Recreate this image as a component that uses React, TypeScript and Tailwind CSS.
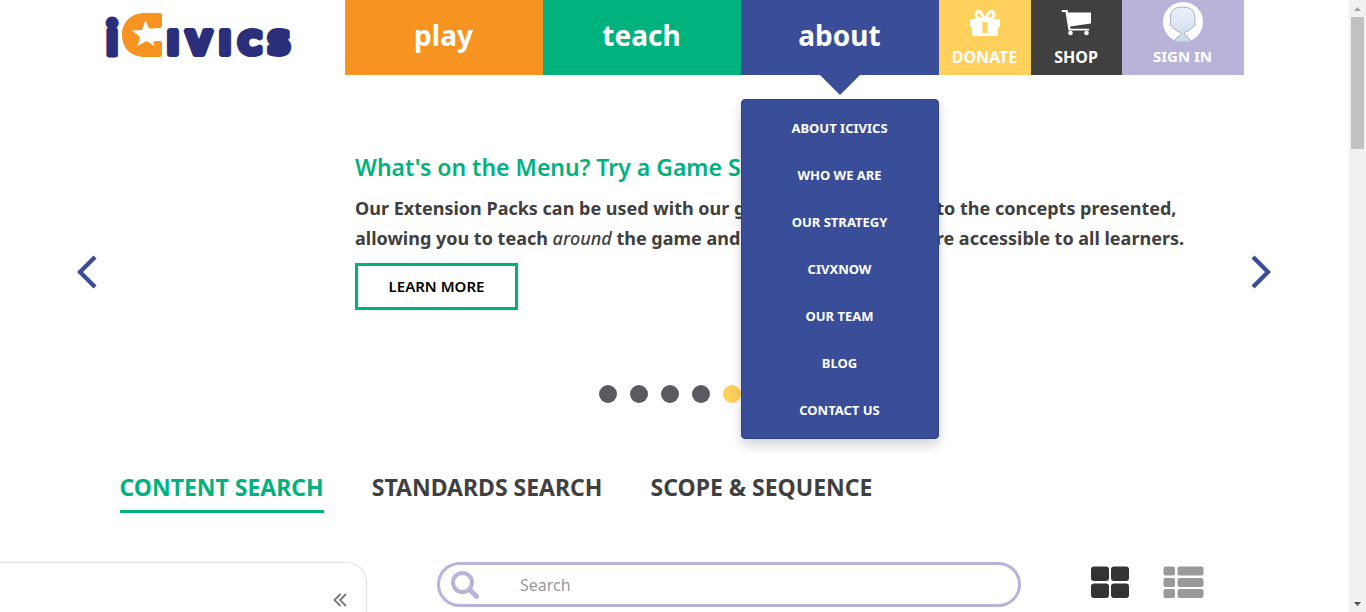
import React from "react";

const navLinks = [
  { label: "play", color: "bg-[#f79421]" },
  { label: "teach", color: "bg-[#00b27d]" },
];

const aboutItems = ["About iCivics", "Who We Are", "Our Strategy", "CivXNow", "Our Team", "Blog", "Contact Us"];

function Logo() {
  return (
    <svg viewBox="-5 -12 200 75" className="h-[75px] w-[200px]" role="img" aria-label="iCivics">
      <g fill="#2a2e7b" stroke="#2a2e7b" strokeLinejoin="round" textAnchor="middle">
        <text x="7" y="42.500" fontSize="47" strokeWidth="5" fontFamily="Lato" fontWeight="900">i</text>
        <text y="42" fontSize="32" strokeWidth="6" fontFamily="DejaVu Sans" fontWeight="700">
          <tspan x="68">I</tspan>
          <tspan x="94">V</tspan>
          <tspan x="120">I</tspan>
          <tspan x="145">C</tspan>
          <tspan x="174">S</tspan>
        </text>
      </g>
      <path
        d="M55 1H40C26 1 17 10 17 23s9 22 23 22h15q2 0 2-2V31q0-2-2-2h-5V16h5q2 0 2-2V3q0-2-2-2z"
        fill="#f79421"
      />
      <path d="M40.500 8l3.500 8.500H57V29h-5q-2 0-4 1l1.500 4-8-5-9 5 2.500-9-8-6.500 10-.5z" fill="#fff" />
    </svg>
  );
}

function GiftIcon() {
  return (
    <svg viewBox="0 0 30 27" className="h-[27px] w-[30px]" fill="#fff" aria-hidden="true">
      <path d="M1 9h28q1 0 1 1v6q0 1-1 1h-1v7q0 2-2 2H4q-2 0-2-2v-7H1q-1 0-1-1v-6q0-1 1-1zM12.500 12v11h5V12z" fillRule="evenodd" />
      <g fill="none" stroke="#fff" strokeWidth="2.800">
        <path d="M14.500 9C12 4 11 1.500 9 1.500c-4 0-4 6.500 0 7z" />
        <path d="M15.500 9C18 4 19 1.500 21 1.500c4 0 4 6.500 0 7z" />
      </g>
    </svg>
  );
}

function CartIcon() {
  return (
    <svg viewBox="0 0 31 26" className="h-[26px] w-[31px]" fill="#fff" aria-hidden="true">
      <path d="M1 0h5.500l1 2.500H30v11L9 16.500l.5 2.300H28v1.800H7.500L4.500 2H1q-1-1 0-2z" />
      <circle cx="9.500" cy="23" r="2.300" />
      <circle cx="25.500" cy="23" r="2.300" />
    </svg>
  );
}

function Avatar() {
  return (
    <svg viewBox="0 0 40 40" className="size-10" aria-hidden="true">
      <defs>
        <linearGradient id="skin" x1="0" y1="0" x2="0" y2="1">
          <stop offset="0" stopColor="#edf3fc" />
          <stop offset="1" stopColor="#cbd9ea" />
        </linearGradient>
        <clipPath id="disc"><circle cx="20" cy="20" r="20" /></clipPath>
      </defs>
      <circle cx="20" cy="20" r="20" fill="#fff" />
      <path
        clipPath="url(#disc)"
        d="M11 40q1-4 6-6.500 2-1.500 0-3.500-5-1-7.500-5-2.500-1-2.500-4l1-1C6 11 9 5 19.500 5S33 11 31.500 20l1 1q0 3-3 4-2.500 4-7.500 5-2 2 0 3.500 5 2.500 6 6.500z"
        fill="url(#skin)"
        stroke="#a3aebb"
      />
    </svg>
  );
}

function Chevron({ flip }: { flip?: boolean }) {
  return (
    <svg viewBox="0 0 20 34" className={flip ? "h-[34px] w-5 rotate-180" : "h-[34px] w-5"} aria-hidden="true">
      <path d="M18 2L3 17l15 15" fill="none" stroke="#394d99" strokeWidth="4.300" />
    </svg>
  );
}

function SearchIcon() {
  return (
    <svg viewBox="0 0 28 28" className="size-7 shrink-0" fill="none" stroke="#b9b3da" aria-hidden="true">
      <circle cx="11.500" cy="11.500" r="9.500" strokeWidth="4" />
      <path d="M19 19l6.500 6.500" strokeWidth="5" strokeLinecap="round" />
    </svg>
  );
}

function Header() {
  return (
    <header className="mx-auto flex h-[75px] w-full max-w-[1168px] px-[15px] font-['Noto_Sans',sans-serif] text-white">
      <a href="#home" className="-ml-1.5 flex min-w-0 flex-1 items-start"><Logo /></a>
      <nav className="flex">
        {navLinks.map((l) => (
          <a key={l.label} href={"#" + l.label} className={"flex w-[198px] items-center justify-center pb-1.5 text-[28px] font-bold " + l.color}>
            {l.label}
          </a>
        ))}
        <div className="relative flex">
          <a href="#about" className="flex w-[198px] items-center justify-center bg-[#394d99] pb-1.5 text-[28px] font-bold">about</a>
          <span className="absolute left-1/2 top-full -translate-x-1/2 border-x-20 border-t-20 border-x-transparent border-t-[#394d99]" />
          <ul className="absolute left-0 top-[99px] z-10 w-full rounded border border-[#2d4187] bg-[#394d99] pt-[5px] pb-1 shadow-[0_6px_12px_rgba(0,0,0,0.175)]">
            {aboutItems.map((t) => (
              <li key={t}>
                <a href="#about" className="flex h-[47px] items-center justify-center text-[13px] font-bold uppercase">{t}</a>
              </li>
            ))}
          </ul>
        </div>
        <a href="#donate" className="flex w-[92px] flex-col items-center bg-[#ffd05c] pt-[10px] text-[16px] font-bold">
          <GiftIcon /><span className="mt-2 leading-6">DONATE</span>
        </a>
        <a href="#shop" className="flex w-[91px] flex-col items-center bg-[#404040] pt-[10px] text-[16px] font-bold">
          <CartIcon /><span className="mt-[9px] leading-6">SHOP</span>
        </a>
        <a href="#signin" className="flex w-[122px] flex-col items-center bg-[#b9b3da] pt-[2px] text-[15px] font-bold">
          <Avatar /><span className="mt-0.5 leading-6">SIGN IN</span>
        </a>
      </nav>
    </header>
  );
}

function Carousel() {
  return (
    <section className="flex flex-col pt-[76px] font-['Noto_Sans',sans-serif]">
      <div className="flex items-start justify-between pr-[78px] pl-[77px]">
        <button aria-label="Previous" className="mt-[104px]"><Chevron /></button>
        <div className="ml-[258px] min-w-0 flex-1 whitespace-nowrap">
          <h2 className="text-[23px] leading-8 font-semibold text-[#00b27d]">What's on the Menu? Try a Game Sampler</h2>
          <p className="mt-[10px] text-[18px] leading-[30px] font-bold text-[#404040]">
            Our Extension Packs can be used with our games to add insights to the concepts presented,
            <br />
            allowing you to teach <em className="font-medium">around</em> the game and ensure that lessons are accessible to all learners.
          </p>
          <a href="#learn" className="mt-[10px] inline-flex h-[47px] w-[163px] items-center justify-center border-3 border-[#00b27d] text-[15px] font-semibold text-black">
            LEARN MORE
          </a>
        </div>
        <button aria-label="Next" className="mt-[104px]"><Chevron flip /></button>
      </div>
      <div className="mt-[75px] flex justify-center gap-[13px] pr-[10px]">
        {[0, 1, 2, 3, 4].map((i) => (
          <button key={i} aria-label={"Slide " + (i + 1)} className={"size-[18px] rounded-full " + (i === 4 ? "bg-[#ffd05c]" : "bg-[#5a5b60]")} />
        ))}
      </div>
    </section>
  );
}

function Tabs() {
  return (
    <nav className="mx-auto mt-[65px] flex w-full max-w-[1170px] gap-12 px-[30px] font-['Noto_Sans',sans-serif] text-[23px] leading-[38px] font-bold whitespace-nowrap text-[#404040]">
      <a href="#content" className="border-b-3 border-[#00b27d] pb-1 text-[#00b27d]">CONTENT SEARCH</a>
      <a href="#standards">STANDARDS SEARCH</a>
      <a href="#scope">SCOPE &amp; SEQUENCE</a>
    </nav>
  );
}

function SearchRow() {
  return (
    <section className="mt-[49px] flex items-start font-['Noto_Sans',sans-serif]">
      <aside className="flex h-[120px] w-[367px] justify-end rounded-tr-[20px] border-t border-r border-[#e0e0e0] pt-[30px] pr-[19px]">
        <button aria-label="Collapse filters" className="h-[14px]">
          <svg viewBox="0 0 14 14" className="size-[14px]" fill="none" stroke="#777" strokeWidth="1.800" aria-hidden="true">
            <path d="M7.500 1l-6 6 6 6M13 1L7 7l6 6" />
          </svg>
        </button>
      </aside>
      <label className="ml-[70px] flex h-[45px] flex-1 items-center rounded-full border-3 border-[#b9b3da] pl-[11px]">
        <SearchIcon />
        <input aria-label="Search" placeholder="Search" className="ml-[41px] min-w-0 flex-1 text-[16px] outline-none placeholder:text-[#999]" />
      </label>
      <div className="mr-[145px] ml-[70px] flex gap-[34px] pt-1">
        <button aria-label="Grid view">
          <svg viewBox="0 0 38 33" className="h-[33px] w-[38px]" fill="#333" aria-hidden="true">
            <rect x="0" y="0.500" width="18" height="14.500" rx="3" /><rect x="20" y="0.500" width="18" height="14.500" rx="3" />
            <rect x="0" y="17.500" width="18" height="14.500" rx="3" /><rect x="20" y="17.500" width="18" height="14.500" rx="3" />
          </svg>
        </button>
        <button aria-label="List view">
          <svg viewBox="0 0 41 33" className="h-[33px] w-[41px]" fill="#999" aria-hidden="true">
            {[0.5, 12, 23].map((y) => (
              <g key={y}><rect x="0.500" y={y} width="11.500" height="9" rx="2" /><rect x="14.500" y={y} width="26" height="9" rx="2" /></g>
            ))}
          </svg>
        </button>
      </div>
    </section>
  );
}

function ScrollTrack() {
  return (
    <div aria-hidden="true" className="flex w-[17px] shrink-0 flex-col items-center bg-[#f1f1f1]">
      <svg viewBox="0 0 17 17" className="size-[17px]" fill="#a3a3a3"><path d="M5 11h7L8.500 7z" /></svg>
      <div className="h-[132px] w-[13px] bg-[#c1c1c1]" />
      <svg viewBox="0 0 17 17" className="mt-auto size-[17px]" fill="#505050"><path d="M5 7h7l-3.500 4z" /></svg>
    </div>
  );
}

export default function App() {
  return (
    <div className="flex h-screen overflow-hidden bg-white">
      <main className="min-w-0 flex-1 overflow-hidden">
        <Header />
        <Carousel />
        <Tabs />
        <SearchRow />
      </main>
      <ScrollTrack />
    </div>
  );
}
